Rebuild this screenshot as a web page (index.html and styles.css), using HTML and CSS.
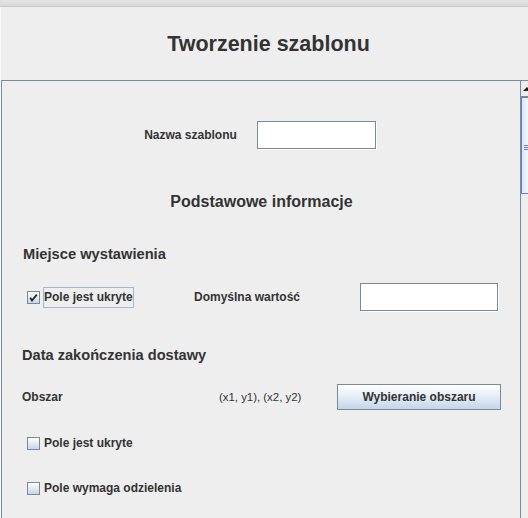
FILE: index.html
```html
<!DOCTYPE html>
<html lang="pl">
<head>
<meta charset="utf-8">
<title>Tworzenie szablonu</title>
<link rel="stylesheet" href="styles.css">
</head>
<body>
<div class="window">
  <div class="topbar"></div>
  <div class="frame">
    <header class="header"><h1 class="title">Tworzenie szablonu</h1></header>
    <div class="pane">
      <div class="content">
        <div class="name-row">
          <span class="label">Nazwa szablonu</span>
          <span class="field field-name"></span>
        </div>
        <h2 class="section-title">Podstawowe informacje</h2>

        <h3 class="group-title">Miejsce wystawienia</h3>
        <div class="row row-default">
          <div class="cell cell-check">
            <span class="check checked"><svg viewBox="0 0 13 13" width="13" height="13"><path d="M3.2 6.8 L5 9.5 L9.8 3.6" fill="none" stroke="#222" stroke-width="1.7"/></svg></span>
            <span class="label check-label focused">Pole jest ukryte</span>
          </div>
          <div class="cell cell-mid"><span class="label">Domyślna wartość</span></div>
          <span class="field field-default"></span>
        </div>

        <h3 class="group-title group-title-2">Data zakończenia dostawy</h3>
        <div class="row row-area">
          <div class="cell cell-area"><span class="label">Obszar</span></div>
          <div class="cell cell-coords"><span class="plain">(x1, y1), (x2, y2)</span></div>
          <button class="button">Wybieranie obszaru</button>
        </div>
        <div class="row row-check">
          <span class="check"></span>
          <span class="label check-label">Pole jest ukryte</span>
        </div>
        <div class="row row-check row-check-2">
          <span class="check"></span>
          <span class="label check-label">Pole wymaga odzielenia</span>
        </div>
      </div>
      <div class="scrollbar">
        <div class="arrow"><svg viewBox="0 0 8 6" width="8" height="6"><path d="M0 5 L4 1 L8 5 Z" fill="#222"/></svg></div>
        <div class="thumb"><span class="grip"></span></div>
      </div>
    </div>
  </div>
</div>
</body>
</html>
```

FILE: styles.css
```css
html, body {
  margin: 0;
  padding: 0;
  background: #eeeeee;
}
body {
  font-family: "Liberation Sans", Arial, sans-serif;
  color: #333333;
}
.window {
  width: 528px;
  height: 518px;
  overflow: hidden;
  background: #eeeeee;
}
.topbar {
  height: 6px;
  background: linear-gradient(#e4e4e4, #d9d9d9);
  border-bottom: 1px solid #c9c9c9;
}
.frame {
  border-left: 1px solid #f9f9f9;
  height: 511px;
  display: flex;
  flex-direction: column;
}
.header {
  height: 73px;
  display: flex;
  align-items: center;
  justify-content: center;
}
.title {
  margin: 0;
  padding-left: 8px;
  padding-top: 1px;
  font-size: 21.5px;
  font-weight: bold;
  color: #333333;
}
.pane {
  flex: 1;
  display: flex;
  width: 540px;
  border-top: 1px solid #7a8a99;
  border-left: 1px solid #7a8a99;
}
.content {
  width: 518px;
  flex: 0 0 518px;
  display: flex;
  flex-direction: column;
}
.label {
  font-size: 12px;
  font-weight: bold;
  line-height: 14px;
  white-space: nowrap;
}
.plain {
  font-size: 11.4px;
  line-height: 14px;
  white-space: nowrap;
}
.field {
  display: block;
  background: #ffffff;
  border: 1px solid #7a8a99;
  box-shadow: 1px 1px 0 #ffffff;
  box-sizing: border-box;
}
.name-row {
  margin-top: 40px;
  height: 28px;
  display: flex;
  align-items: center;
  justify-content: center;
  gap: 20px;
  padding-right: 2px;
}
.field-name {
  width: 119px;
  height: 28px;
}
.section-title {
  margin: 43px 0 0;
  height: 20px;
  line-height: 20px;
  font-size: 16px;
  font-weight: bold;
  text-align: center;
  padding-left: 1px;
}
.group-title {
  margin: 33px 0 0 21px;
  height: 18px;
  line-height: 18px;
  font-size: 14.7px;
  font-weight: bold;
}
.group-title-2 {
  margin-top: 35px;
  margin-left: 20px;
  font-size: 14.6px;
}
.row {
  display: flex;
  align-items: center;
}
.row-default {
  margin-top: 20px;
  height: 28px;
  padding-left: 25px;
}
.cell {
  display: flex;
  align-items: center;
}
.cell-check {
  width: 167px;
}
.cell-mid {
  width: 166px;
}
.field-default {
  width: 138px;
  height: 28px;
}
.check {
  width: 13px;
  height: 13px;
  box-sizing: border-box;
  border: 1px solid #7a8a99;
  background: linear-gradient(#ffffff, #c8d5e4);
  display: inline-flex;
  align-items: center;
  justify-content: center;
  flex: 0 0 auto;
}
.check svg {
  display: block;
  margin: -1px;
}
.check-label {
  margin-left: 3px;
  padding: 2px 0 3px 0;
  border: 1px solid transparent;
}
.check-label.focused {
  border-color: #a3b8cc;
}
.group-title-2 + .row-area {
  margin-top: 20px;
}
.row-area {
  height: 26px;
  padding-left: 20px;
}
.cell-area {
  width: 197px;
}
.cell-coords {
  width: 118px;
}
.button {
  width: 164px;
  height: 26px;
  box-sizing: border-box;
  border: 1px solid #7a8a99;
  background: linear-gradient(#ffffff, #dde8f3 60%, #c4d5e7);
  font-family: "Liberation Sans", Arial, sans-serif;
  font-size: 12px;
  font-weight: bold;
  color: #333333;
  padding: 0;
}
.row-check {
  margin-top: 23px;
  height: 20px;
  padding-left: 25px;
}
.row-check-2 {
  margin-top: 25px;
}
.scrollbar {
  flex: 0 0 17px;
  border-left: 1px solid #7a8a99;
  background: #eeeeee;
  display: flex;
  flex-direction: column;
}
.arrow {
  height: 15px;
  border-bottom: 1px solid #7a8a99;
  background: #eeeeee;
  display: flex;
  align-items: center;
  padding-left: 2px;
}
.arrow svg {
  display: block;
}
.thumb {
  height: 97px;
  box-sizing: border-box;
  border: 1px solid #6382bf;
  background: linear-gradient(90deg, #dbe6f4, #f2f6fb 40%, #dbe6f4);
  position: relative;
}
.grip {
  position: absolute;
  left: 2px;
  top: 47px;
  width: 8px;
  height: 5px;
  background: repeating-linear-gradient(#6382bf 0 1px, transparent 1px 2px);
}
```
